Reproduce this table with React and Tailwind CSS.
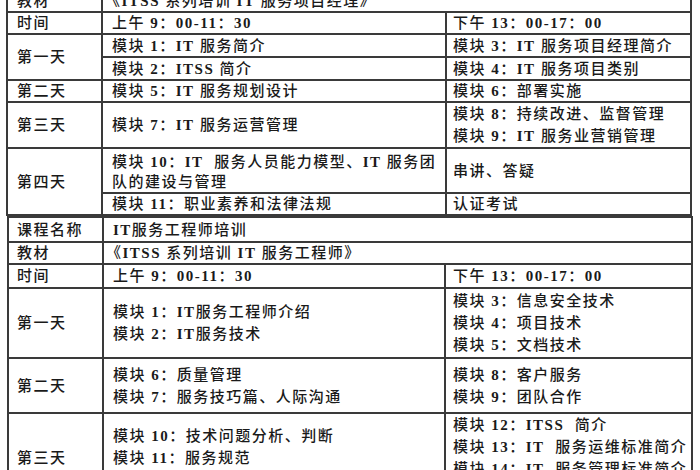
import React from "react";

const FONT = { fontFamily: "'Liberation Serif', 'Noto Sans CJK SC', serif" };

function T({ children }) {
  if (typeof children !== "string") return children;
  const parts = children.split(/([A-Za-z0-9\-]+)/);
  return parts.map((p, i) =>
    /^[A-Za-z0-9\-]+$/.test(p) ? (
      <b key={i} className="font-bold">
        {p}
      </b>
    ) : (
      <React.Fragment key={i}>{p}</React.Fragment>
    )
  );
}

function C({ className = "", lines }) {
  return (
    <div
      className={
        "flex flex-col justify-center border-r-2 border-b-2 border-[#3a3a3a] overflow-hidden whitespace-nowrap " +
        className
      }
    >
      {lines.map((l, i) => (
        <span key={i}>
          <T>{l}</T>
        </span>
      ))}
    </div>
  );
}

export default function App() {
  return (
    <div
      className="w-[700px] h-[470px] overflow-hidden bg-white text-[#1a1a1a] text-[15px] leading-[22px] tracking-[1.5px] font-medium"
      style={FONT}
    >
      {/* Table 1 */}
      <div className="ml-[6px] mt-[-12px] w-[686px] border-l-2 border-t-2 border-[#3a3a3a] grid grid-cols-[95px_344px_245px] grid-rows-[23px_22px_23px_23px_22px_46px_45px_22px]">
        <C className="pl-[9px]" lines={["教材"]} />
        <C className="col-span-2 pl-[2px]" lines={["《ITSS 系列培训 IT 服务项目经理》"]} />

        <C className="pl-[9px]" lines={["时间"]} />
        <C className="pl-[9px]" lines={["上午 9：00-11：30"]} />
        <C className="pl-[6px]" lines={["下午 13：00-17：00"]} />

        <C className="row-span-2 pl-[9px]" lines={["第一天"]} />
        <C className="pl-[9px]" lines={["模块 1：IT 服务简介"]} />
        <C className="pl-[6px]" lines={["模块 3：IT 服务项目经理简介"]} />
        <C className="pl-[9px]" lines={["模块 2：ITSS 简介"]} />
        <C className="pl-[6px]" lines={["模块 4：IT 服务项目类别"]} />

        <C className="pl-[9px]" lines={["第二天"]} />
        <C className="pl-[9px]" lines={["模块 5：IT 服务规划设计"]} />
        <C className="pl-[6px]" lines={["模块 6：部署实施"]} />

        <C className="pl-[9px]" lines={["第三天"]} />
        <C className="pl-[9px]" lines={["模块 7：IT 服务运营管理"]} />
        <C className="pl-[6px]" lines={["模块 8：持续改进、监督管理", "模块 9：IT 服务业营销管理"]} />

        <C className="row-span-2 pl-[9px]" lines={["第四天"]} />
        <C
          className="pl-[9px] leading-[20px] pt-[3px]"
          lines={["模块 10：IT\u00a0 服务人员能力模型、IT 服务团", "队的建设与管理"]}
        />
        <C className="pl-[6px]" lines={["串讲、答疑"]} />
        <C className="pl-[9px]" lines={["模块 11：职业素养和法律法规"]} />
        <C className="pl-[6px]" lines={["认证考试"]} />
      </div>

      {/* Table 2 */}
      <div className="ml-[7px] w-[686px] border-l-2 border-t-2 border-[#3a3a3a] grid grid-cols-[95px_342px_247px] grid-rows-[25px_22px_24px_70px_55px_90px]">
        <C className="pl-[8px]" lines={["课程名称"]} />
        <C className="col-span-2 pl-[9px]" lines={["IT服务工程师培训"]} />

        <C className="pl-[8px]" lines={["教材"]} />
        <C className="col-span-2 pl-[2px]" lines={["《ITSS 系列培训 IT 服务工程师》"]} />

        <C className="pl-[8px]" lines={["时间"]} />
        <C className="pl-[9px]" lines={["上午 9：00-11：30"]} />
        <C className="pl-[7px]" lines={["下午 13：00-17：00"]} />

        <C className="pl-[8px]" lines={["第一天"]} />
        <C className="pl-[9px]" lines={["模块 1：IT服务工程师介绍", "模块 2：IT服务技术"]} />
        <C className="pl-[7px]" lines={["模块 3：信息安全技术", "模块 4：项目技术", "模块 5：文档技术"]} />

        <C className="pl-[8px]" lines={["第二天"]} />
        <C className="pl-[9px]" lines={["模块 6：质量管理", "模块 7：服务技巧篇、人际沟通"]} />
        <C className="pl-[7px]" lines={["模块 8：客户服务", "模块 9：团队合作"]} />

        <C className="pl-[8px]" lines={["第三天"]} />
        <C className="pl-[9px]" lines={["模块 10：技术问题分析、判断", "模块 11：服务规范", "模块 12：服务管理"]} />
        <C
          className="pl-[7px]"
          lines={[
            "模块 12：ITSS\u00a0 简介",
            "模块 13：IT\u00a0 服务运维标准简介",
            "模块 14：IT\u00a0 服务管理标准简介",
            "模块 15：服务规范",
          ]}
        />
      </div>
    </div>
  );
}
